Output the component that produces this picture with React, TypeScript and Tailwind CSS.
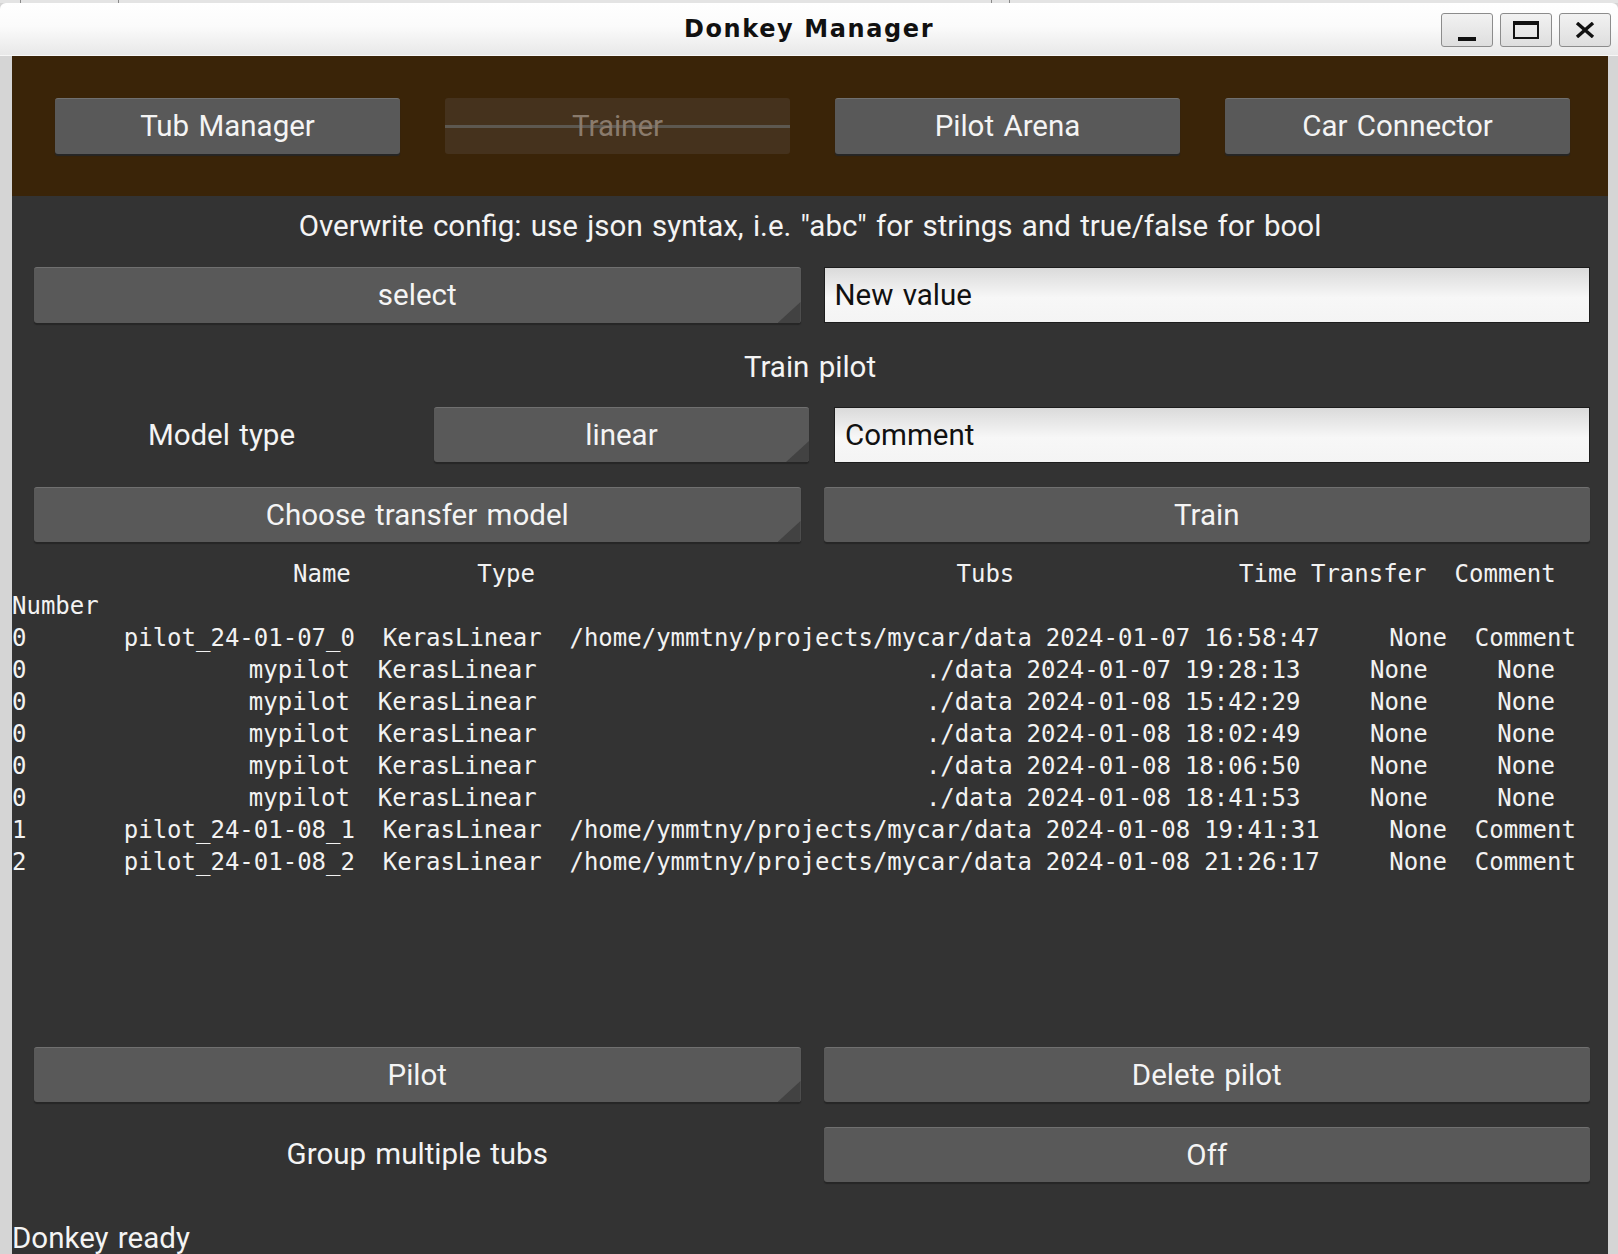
import React from 'react';

type Pilot = {
  number: string;
  name: string;
  type: string;
  tubs: string;
  time: string;
  transfer: string;
  comment: string;
};

const pilots: Pilot[] = [
  { number: '0', name: 'pilot_24-01-07_0', type: 'KerasLinear', tubs: '/home/ymmtny/projects/mycar/data', time: '2024-01-07 16:58:47', transfer: 'None', comment: 'Comment' },
  { number: '0', name: 'mypilot', type: 'KerasLinear', tubs: './data', time: '2024-01-07 19:28:13', transfer: 'None', comment: 'None' },
  { number: '0', name: 'mypilot', type: 'KerasLinear', tubs: './data', time: '2024-01-08 15:42:29', transfer: 'None', comment: 'None' },
  { number: '0', name: 'mypilot', type: 'KerasLinear', tubs: './data', time: '2024-01-08 18:02:49', transfer: 'None', comment: 'None' },
  { number: '0', name: 'mypilot', type: 'KerasLinear', tubs: './data', time: '2024-01-08 18:06:50', transfer: 'None', comment: 'None' },
  { number: '0', name: 'mypilot', type: 'KerasLinear', tubs: './data', time: '2024-01-08 18:41:53', transfer: 'None', comment: 'None' },
  { number: '1', name: 'pilot_24-01-08_1', type: 'KerasLinear', tubs: '/home/ymmtny/projects/mycar/data', time: '2024-01-08 19:41:31', transfer: 'None', comment: 'Comment' },
  { number: '2', name: 'pilot_24-01-08_2', type: 'KerasLinear', tubs: '/home/ymmtny/projects/mycar/data', time: '2024-01-08 21:26:17', transfer: 'None', comment: 'Comment' },
];

// same layout as DataFrame.to_string()
const headerText =
  ''.padEnd(6) + ' ' + 'Name'.padStart(17) + ' ' + 'Type'.padStart(12) + ' ' + 'Tubs'.padStart(33) + ' ' +
  'Time'.padStart(19) + ' ' + 'Transfer'.padStart(8) + ' ' + 'Comment'.padStart(8);

const rowsText = [
  'Number',
  ...pilots.map(
    (p) =>
      p.number.padEnd(6) + ' ' + (' ' + p.name).padStart(17) + ' ' + (' ' + p.type).padStart(12) + ' ' +
      (' ' + p.tubs).padStart(33) + ' ' + p.time.padStart(19) + ' ' + (' ' + p.transfer).padStart(8) + ' ' +
      (' ' + p.comment).padStart(8)
  ),
].join('\n');

const Btn = ({
  children,
  spinner = false,
  className = '',
}: {
  children: React.ReactNode;
  spinner?: boolean;
  className?: string;
}) => (
  <div
    className={`relative flex h-[55px] items-center justify-center rounded-[3px] border-t border-[#707070] bg-[#595959] text-[#f4f4f4] shadow-[0_2px_1px_#262626] ${className}`}
  >
    {children}
    {spinner && (
      <span className="absolute right-0 bottom-0 h-[21px] w-[23px] rounded-br-[3px] bg-[#424242] [clip-path:polygon(100%_0,100%_100%,0_100%)]" />
    )}
  </div>
);

const Input = ({ value, className = '' }: { value: string; className?: string }) => (
  <div
    className={`flex h-[56px] items-center border border-[#1d1d1d] bg-[linear-gradient(#dadada,#f7f7f7_55%,#f4f4f4)] pl-[10px] text-[#111111] ${className}`}
  >
    {value}
  </div>
);

const TabButton = ({ label, disabled = false }: { label: string; disabled?: boolean }) =>
  disabled ? (
    <div className="relative flex h-[56px] flex-1 items-center justify-center rounded-[3px] bg-[#45321d] text-[#8a7b6c]">
      <span className="absolute inset-x-0 top-[27px] h-[3px] bg-[#5d5850]" />
      <span className="relative">{label}</span>
    </div>
  ) : (
    <Btn className="h-[56px] flex-1">{label}</Btn>
  );

const WinButton = ({ children }: { children: React.ReactNode }) => (
  <div className="flex h-[34px] w-[52px] items-center justify-center rounded-[3px] border border-[#8c8c8c] bg-[linear-gradient(#f2f2f2,#dedede)]">
    {children}
  </div>
);

export default function App() {
  return (
    <div className="flex h-[1254px] w-[1618px] flex-col overflow-hidden bg-[#d5d5d5] font-['Roboto','Noto_Sans',sans-serif] [&>*]:shrink-0">
      {/* desktop strip behind the window */}
      <div className="flex h-[3px] bg-[#e4e4e4]">
        <span className="ml-[20px] w-px bg-[#8a8a8a]" />
        <span className="ml-[97px] w-px bg-[#8a8a8a]" />
        <span className="ml-[872px] w-px bg-[#8a8a8a]" />
        <span className="ml-[17px] w-px bg-[#8a8a8a]" />
      </div>

      {/* title bar */}
      <div className="grid h-[53px] grid-cols-[1fr_auto_1fr] items-center rounded-t-[6px] border-b border-[#f7f7f7] bg-[linear-gradient(#ffffff,#fbfbfb_45%,#e8e8e8)]">
        <div />
        <div className="font-['DejaVu_Sans',sans-serif] text-[24px] font-bold tracking-[1.6px] text-[#111111]">
          Donkey Manager
        </div>
        <div className="flex justify-end gap-[7px] pr-[7px] pt-[1px]">
          <WinButton>
            <svg width="20" height="24" viewBox="0 0 20 24">
              <rect x="1" y="19" width="18" height="4" fill="#111" />
            </svg>
          </WinButton>
          <WinButton>
            <svg width="28" height="20" viewBox="0 0 28 20">
              <rect x="2" y="2" width="24" height="16" fill="none" stroke="#111" strokeWidth="2" />
              <rect x="2" y="1" width="24" height="4" fill="#111" />
            </svg>
          </WinButton>
          <WinButton>
            <svg width="20" height="16" viewBox="0 0 20 16">
              <path d="M2 1 L18 15 M18 1 L2 15" stroke="#111" strokeWidth="3.4" />
            </svg>
          </WinButton>
        </div>
      </div>

      <div className="flex h-[1198px]">
        <div className="w-[12px]" />
        <main className="flex w-[1596px] flex-col overflow-hidden bg-[#333333] text-[29.5px] text-[#f4f4f4] [word-spacing:2px] [&>*]:shrink-0">
          {/* screen tabs */}
          <div className="flex h-[140px] items-center gap-[45px] bg-[#3a2408] pl-[43px] pr-[38px]">
            <TabButton label="Tub Manager" />
            <TabButton label="Trainer" disabled />
            <TabButton label="Pilot Arena" />
            <TabButton label="Car Connector" />
          </div>

          <div className="mt-[2px] flex h-[56px] items-center justify-center">
            Overwrite config: use json syntax, i.e. "abc" for strings and true/false for bool
          </div>

          <div className="mt-[13px] grid grid-cols-2 gap-[23px] pl-[22px] pr-[18px]">
            <Btn spinner className="h-[56px]">select</Btn>
            <Input value="New value" />
          </div>

          <div className="mt-[16px] flex h-[56px] items-center justify-center">Train pilot</div>

          <div className="mt-[12px] flex gap-[25px] pl-[22px] pr-[18px]">
            <div className="flex w-[375px] items-center justify-center">Model type</div>
            <Btn spinner className="w-[375px]">linear</Btn>
            <Input value="Comment" className="h-[55px] flex-1" />
          </div>

          <div className="mt-[24px] grid grid-cols-2 gap-[23px] pl-[22px] pr-[18px]">
            <Btn spinner>Choose transfer model</Btn>
            <Btn>Train</Btn>
          </div>

          <div className="mt-[16px] font-['DejaVu_Sans_Mono',monospace] text-[24px] leading-[32px] text-[#f2f2f2]">
            <pre className="m-0 font-[inherit] [word-spacing:-0.4px]">{headerText}</pre>
            <pre className="m-0 font-[inherit] [word-spacing:-0.55px]">{rowsText}</pre>
          </div>

          <div className="mt-[169px] grid grid-cols-2 gap-[23px] pl-[22px] pr-[18px]">
            <Btn spinner>Pilot</Btn>
            <Btn>Delete pilot</Btn>
          </div>

          <div className="mt-[25px] grid grid-cols-2 gap-[23px] pl-[22px] pr-[18px]">
            <div className="flex h-[55px] items-center justify-center">Group multiple tubs</div>
            <Btn>Off</Btn>
          </div>

          <div className="mt-[36px] leading-[40px]">Donkey ready</div>
        </main>
      </div>
    </div>
  );
}
